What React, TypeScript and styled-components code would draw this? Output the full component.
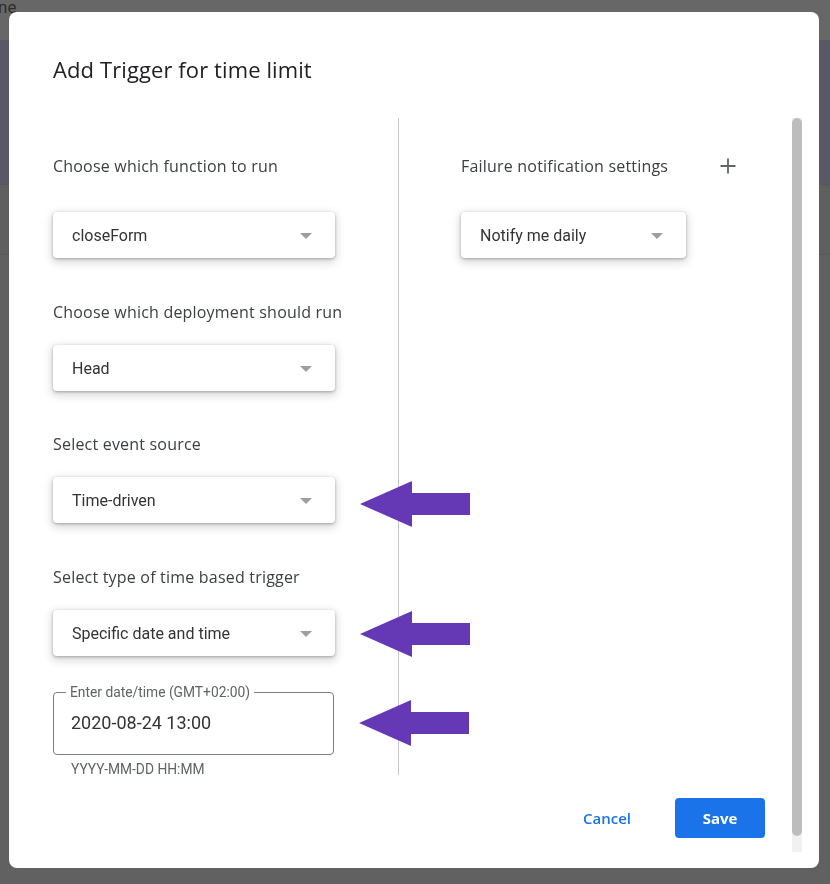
import React from 'react';
import styled, { createGlobalStyle } from 'styled-components';

const GlobalStyle = createGlobalStyle`
  html, body {
    margin: 0;
    padding: 0;
    background: #616161;
  }
  * {
    box-sizing: border-box;
  }
`;

// Page behind the modal scrim
const Behind = styled.div`
  position: fixed;
  inset: 0;
  background: #616161;
  overflow: hidden;
`;

const BehindTop = styled.div`
  height: 40px;
  background: #676767;
  font-family: 'Roboto', sans-serif;
  font-size: 17px;
  line-height: 14px;
  color: #2e2e2e;
  margin-left: -2px;
`;

const BehindBand = styled.div<{ $bg: string; $h: number }>`
  height: ${(p) => p.$h}px;
  background: ${(p) => p.$bg};
  border-bottom: 1px solid #585858;
`;

const Page = styled.div`
  position: relative;
  z-index: 1;
  width: 830px;
  height: 884px;
  padding: 12px 11px 16px 9px;
`;

const Dialog = styled.div`
  height: 100%;
  background: #ffffff;
  border-radius: 8px;
  display: flex;
  flex-direction: column;
  overflow: hidden;
`;

const Title = styled.h1`
  margin: 0;
  padding: 43px 44px 0;
  font-family: 'Open Sans', 'Roboto', sans-serif;
  font-weight: 400;
  font-size: 22px;
  letter-spacing: 0.1px;
  line-height: 28px;
  color: #202124;
`;

const Body = styled.div`
  flex: 1;
  display: flex;
  margin-top: 35px;
  min-height: 0;
`;

const Scroll = styled.div`
  flex: 1;
  display: flex;
  flex-direction: column;
`;

const Columns = styled.div`
  display: grid;
  grid-template-columns: 390px 1fr;
`;

const LeftCol = styled.div`
  height: 657px;
  border-right: 1px solid #c6c6c6;
  padding: 36px 0 0 44px;
  display: flex;
  flex-direction: column;
`;

const RightCol = styled.div`
  padding: 36px 0 0 62px;
  display: flex;
  flex-direction: column;
`;

const LabelRow = styled.div`
  display: flex;
  align-items: center;
  justify-content: space-between;
  width: 276px;
`;

const Label = styled.div<{ $top?: number }>`
  margin-top: ${(p) => p.$top ?? 0}px;
  font-family: 'Open Sans', 'Roboto', sans-serif;
  font-size: 16px;
  letter-spacing: 0.2px;
  line-height: 24px;
  color: #3c4043;
`;

const FieldRow = styled.div<{ $top: number; $width?: number }>`
  position: relative;
  margin-top: ${(p) => p.$top}px;
  width: ${(p) => p.$width ?? 282}px;
`;

const Select = styled.div`
  height: 46px;
  border-radius: 4px;
  background: #fff;
  box-shadow: 0 1px 3px rgba(0, 0, 0, 0.28), 0 3px 8px 2px rgba(0, 0, 0, 0.14);
  display: flex;
  align-items: center;
  justify-content: space-between;
  padding: 0 23px 0 19px;
  font-family: 'Roboto', sans-serif;
  font-size: 16px;
  color: #333;
`;

const Caret = styled.span`
  width: 0;
  height: 0;
  border-left: 6px solid transparent;
  border-right: 6px solid transparent;
  border-top: 6px solid #9e9e9e;
  margin-top: 2px;
`;

const Outlined = styled.fieldset`
  margin: 0;
  width: 281px;
  border: 1px solid #7d7d7d;
  border-radius: 4px;
  padding: 0 14px 19px 12px;
`;

const Legend = styled.legend`
  padding: 0 4px;
  font-family: 'Roboto', sans-serif;
  font-size: 13.8px;
  line-height: 16px;
  color: #5f6368;
`;

const Value = styled.div`
  margin-top: 11px;
  padding-left: 5px;
  font-family: 'Roboto', sans-serif;
  font-size: 18px;
  line-height: 24px;
  color: #333;
`;

const Helper = styled.div`
  margin-top: 6px;
  padding-left: 18px;
  font-family: 'Roboto', sans-serif;
  font-size: 13.8px;
  line-height: 16px;
  color: #5f6368;
`;

const Arrow = styled.svg<{ $dy: number }>`
  position: absolute;
  left: calc(100% + 25px);
  top: calc(50% + ${(p) => p.$dy}px);
  transform: translateY(-50%);
`;

const Plus = styled.svg`
  display: block;
`;

const Footer = styled.div`
  display: flex;
  justify-content: flex-end;
  align-items: center;
  padding: 23px 27px 0 0;
`;

const Button = styled.button<{ $primary?: boolean }>`
  height: 40px;
  border: none;
  border-radius: 4px;
  cursor: pointer;
  font-family: 'Open Sans', 'Roboto', sans-serif;
  font-size: 15px;
  font-weight: ${(p) => (p.$primary ? 700 : 600)};
  width: ${(p) => (p.$primary ? '90px' : 'auto')};
  padding: ${(p) => (p.$primary ? '0' : '0 44px 0 20px')};
  background: ${(p) => (p.$primary ? '#1a73e8' : 'transparent')};
  color: ${(p) => (p.$primary ? '#ffffff' : '#1a73e8')};
`;

const Track = styled.div`
  width: 10px;
  margin: 0 17px 16px 0;
  background: #f1f1f1;
  display: flex;
  flex-direction: column;
`;

const Thumb = styled.div`
  height: 718px;
  background: #bdbdbd;
  border-radius: 5px;
`;

const PointerArrow = ({ dy }: { dy: number }) => (
  <Arrow $dy={dy} width="110" height="46" viewBox="0 0 110 46">
    <polygon points="0,23 52,0 52,12 110,12 110,34 52,34 52,46" fill="#6539b5" />
  </Arrow>
);

const Dropdown = ({ value }: { value: string }) => (
  <Select>
    <span>{value}</span>
    <Caret />
  </Select>
);

export default function App() {
  return (
    <>
      <GlobalStyle />
      <Behind>
        <BehindTop>ne</BehindTop>
        <BehindBand $bg="#5b5865" $h={145} />
        <BehindBand $bg="#5f5f5f" $h={70} />
      </Behind>
      <Page>
        <Dialog>
          <Title>Add Trigger for time limit</Title>
          <Body>
            <Scroll>
              <Columns>
                <LeftCol>
                  <Label>Choose which function to run</Label>
                  <FieldRow $top={34}>
                    <Dropdown value="closeForm" />
                  </FieldRow>

                  <Label $top={42}>Choose which deployment should run</Label>
                  <FieldRow $top={21}>
                    <Dropdown value="Head" />
                  </FieldRow>

                  <Label $top={41}>Select event source</Label>
                  <FieldRow $top={21}>
                    <Dropdown value="Time-driven" />
                    <PointerArrow dy={4} />
                  </FieldRow>

                  <Label $top={42}>Select type of time based trigger</Label>
                  <FieldRow $top={21}>
                    <Dropdown value="Specific date and time" />
                    <PointerArrow dy={1} />
                  </FieldRow>

                  <FieldRow $top={28} $width={281}>
                    <Outlined>
                      <Legend>Enter date/time (GMT+02:00)</Legend>
                      <Value>2020-08-24 13:00</Value>
                    </Outlined>
                    <PointerArrow dy={3} />
                  </FieldRow>
                  <Helper>YYYY-MM-DD HH:MM</Helper>
                </LeftCol>

                <RightCol>
                  <LabelRow>
                    <Label>Failure notification settings</Label>
                    <Plus width="18" height="18" viewBox="0 0 18 18">
                      <path d="M9 1.5v15M1.5 9h15" stroke="#5f6368" strokeWidth="1.8" fill="none" />
                    </Plus>
                  </LabelRow>
                  <FieldRow $top={34} $width={225}>
                    <Dropdown value="Notify me daily" />
                  </FieldRow>
                </RightCol>
              </Columns>

              <Footer>
                <Button>Cancel</Button>
                <Button $primary>Save</Button>
              </Footer>
            </Scroll>
            <Track>
              <Thumb />
            </Track>
          </Body>
        </Dialog>
      </Page>
    </>
  );
}
